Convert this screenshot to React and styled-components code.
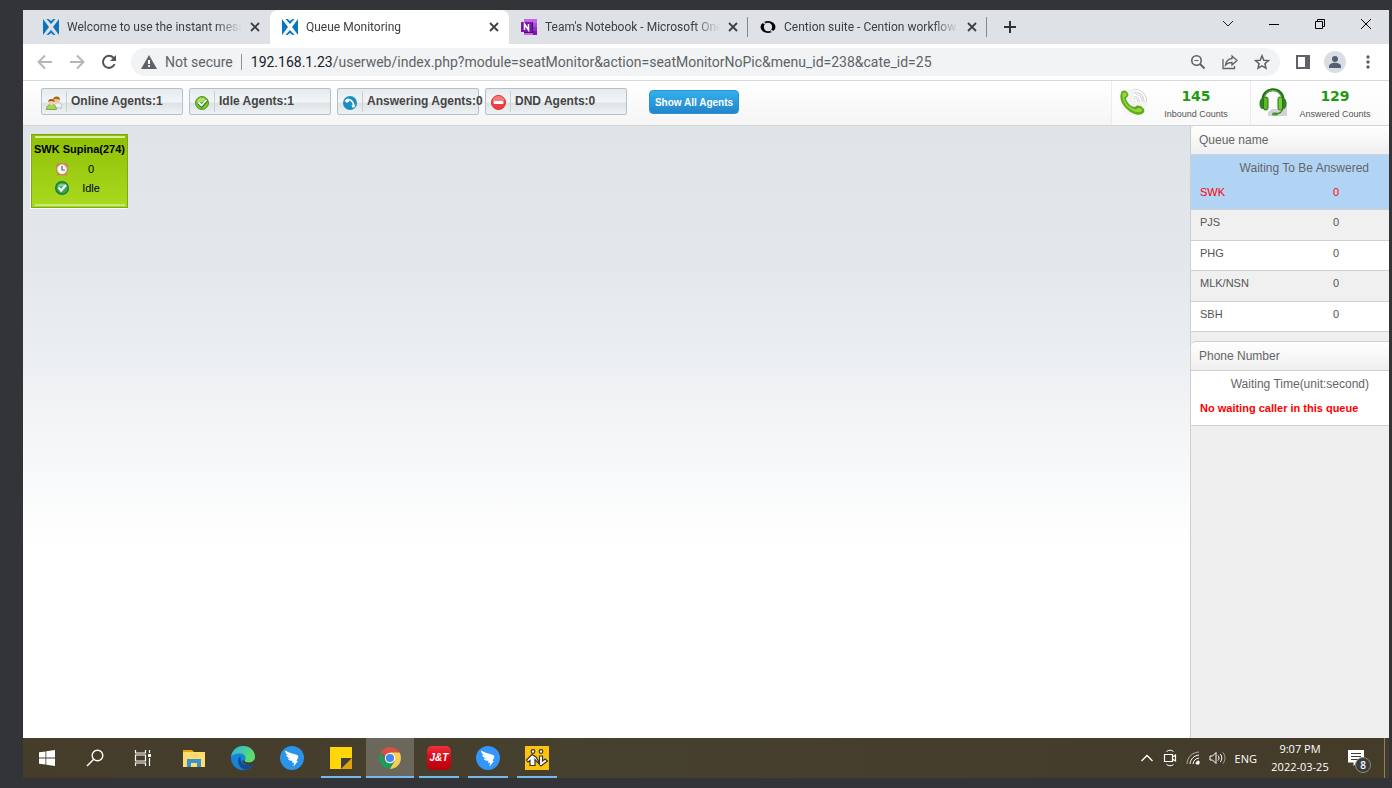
import React from 'react';
import styled, { createGlobalStyle, css } from 'styled-components';

const tabs = [
	{ id: 1, title: 'Welcome to use the instant messenger', icon: 'x' },
	{ id: 2, title: 'Queue Monitoring', icon: 'x', active: true },
	{ id: 3, title: "Team's Notebook - Microsoft OneNote", icon: 'onenote', divider: true },
	{ id: 4, title: 'Cention suite - Cention workflow', icon: 'cention', divider: true },
];

const counters = [
	{ label: 'Online Agents', value: 1, icon: 'users' },
	{ label: 'Idle Agents', value: 1, icon: 'check' },
	{ label: 'Answering Agents', value: 0, icon: 'phone' },
	{ label: 'DND Agents', value: 0, icon: 'dnd' },
];

const queues = [
	{ name: 'SWK', waiting: 0, selected: true },
	{ name: 'PJS', waiting: 0, striped: true },
	{ name: 'PHG', waiting: 0 },
	{ name: 'MLK/NSN', waiting: 0, striped: true },
	{ name: 'SBH', waiting: 0 },
];

const App = () => (
	<>
		<GlobalStyle />
		<Screen>
			<TabStrip>
				{tabs.map((tab) => (
					<Tab key={tab.id} $active={tab.active} $divider={tab.divider}>
						<Favicon name={tab.icon} />
						<TabTitle>{tab.title}</TabTitle>
						<TabClose aria-label="Close tab">
							<CloseIcon />
						</TabClose>
					</Tab>
				))}
				<NewTab aria-label="New tab">
					<svg width="14" height="14" viewBox="0 0 14 14" stroke="#303236" strokeWidth="2">
						<path d="M7 1v12M1 7h12" />
					</svg>
				</NewTab>
				<WindowControls>
					<WindowButton aria-label="Search tabs">
						<svg width="12" height="12" viewBox="0 0 12 12" fill="none" stroke="#222">
							<path d="M1 3l5 5 5-5" />
						</svg>
					</WindowButton>
					<WindowButton aria-label="Minimize">
						<svg width="12" height="12" viewBox="0 0 12 12" stroke="#000">
							<path d="M1 6.5h10" />
						</svg>
					</WindowButton>
					<WindowButton aria-label="Restore">
						<svg width="12" height="12" viewBox="0 0 12 12" fill="none" stroke="#000">
							<path d="M1.5 3.5h7v7h-7zM3.500 3.500v-2h7v7h-2" />
						</svg>
					</WindowButton>
					<WindowButton aria-label="Close">
						<svg width="12" height="12" viewBox="0 0 12 12" stroke="#000">
							<path d="M1 1l10 10M11 1L1 11" />
						</svg>
					</WindowButton>
				</WindowControls>
			</TabStrip>

			<AddressBar>
				<NavButton aria-label="Back">
					<svg width="16" height="16" viewBox="0 0 16 16" fill="none" stroke="#b4b6b9" strokeWidth="2">
						<path d="M15 8H2M8 1.500L1.500 8 8 14.500" />
					</svg>
				</NavButton>
				<NavButton aria-label="Forward">
					<svg width="16" height="16" viewBox="0 0 16 16" fill="none" stroke="#b4b6b9" strokeWidth="2">
						<path d="M1 8h13M8 1.500L14.500 8 8 14.500" />
					</svg>
				</NavButton>
				<NavButton aria-label="Reload">
					<svg width="16" height="16" viewBox="0 0 16 16" fill="none" stroke="#505357" strokeWidth="2">
						<path d="M13.500 10.200A6 6 0 1 1 12.400 3.800L14 5.500" />
						<path d="M15 1v6H9z" fill="#505357" stroke="none" />
					</svg>
				</NavButton>
				<Omnibox>
					<svg width="16" height="14" viewBox="0 0 16 14">
						<path d="M8 0l8 14H0z" fill="#5f6368" />
						<path d="M8 5v4M8 10.300v1.700" stroke="#fff" strokeWidth="2" />
					</svg>
					<Security>Not secure</Security>
					<Url>
						<b>192.168.1.23</b>/userweb/index.php?module=seatMonitor&amp;action=seatMonitorNoPic&amp;menu_id=238&amp;cate_id=25
					</Url>
					<OmniButton aria-label="Zoom">
						<svg width="16" height="16" viewBox="0 0 16 16" fill="none" stroke="#5f6368">
							<circle cx="6.500" cy="6.500" r="4.700" strokeWidth="1.600" />
							<path d="M10 10l4.500 4.500" strokeWidth="2" />
							<path d="M4.500 6.500h4" />
						</svg>
					</OmniButton>
					<OmniButton aria-label="Share">
						<svg width="16" height="16" viewBox="0 0 16 16" fill="none" stroke="#5f6368" strokeWidth="1.300">
							<path d="M1 5v9.500h11.500V12" />
							<path d="M10 2l5 4.500-5 4.500V8.500c-3 0-5 .8-6.500 2.500.5-3.500 2.500-6 6.500-6.500z" />
						</svg>
					</OmniButton>
					<OmniButton aria-label="Bookmark">
						<svg width="16" height="16" viewBox="0 0 16 16" fill="none" stroke="#5f6368" strokeWidth="1.500">
							<path d="M8 1.800l1.800 4.400 4.700.4-3.600 3.100 1.100 4.600L8 11.900l-4 2.400 1.100-4.600-3.600-3.100 4.700-.4z" />
						</svg>
					</OmniButton>
				</Omnibox>
				<BrowserActions>
					<OmniButton aria-label="Side panel">
						<svg width="14" height="14" viewBox="0 0 14 14">
							<path d="M0 0h14v14H0z" fill="#5f6368" />
							<path d="M2 2h7v10H2z" fill="#fff" />
						</svg>
					</OmniButton>
					<OmniButton aria-label="Profile">
						<svg width="22" height="22" viewBox="0 0 22 22" fill="#545f73">
							<circle cx="11" cy="11" r="11" fill="#dadde3" />
							<circle cx="11" cy="8" r="3" />
							<path d="M5 17v-1.500c0-5 12-5 12 0V17z" />
						</svg>
					</OmniButton>
					<OmniButton aria-label="Menu">
						<svg width="4" height="14" viewBox="0 0 4 14" fill="#5f6368">
							<circle cx="2" cy="2" r="1.700" />
							<circle cx="2" cy="7" r="1.700" />
							<circle cx="2" cy="12" r="1.700" />
						</svg>
					</OmniButton>
				</BrowserActions>
			</AddressBar>

			<MonitorBar>
				{counters.map((c) => (
					<Counter key={c.label}>
						<CounterIcon>
							<StatusIcon name={c.icon} />
						</CounterIcon>
						<span>
							{c.label}:{c.value}
						</span>
					</Counter>
				))}
				<ShowAll>Show All Agents</ShowAll>
				<Stats>
					<Stat>
						<InboundIcon />
						<StatText>
							<strong>145</strong>
							<small>Inbound Counts</small>
						</StatText>
					</Stat>
					<Stat>
						<HeadsetIcon />
						<StatText>
							<strong>129</strong>
							<small>Answered Counts</small>
						</StatText>
					</Stat>
				</Stats>
			</MonitorBar>

			<Content>
				<Seats>
					<AgentCard>
						<AgentName>SWK Supina(274)</AgentName>
						<AgentLine>
							<ClockIcon />
							<span>0</span>
						</AgentLine>
						<AgentLine>
							<IdleIcon />
							<span>Idle</span>
						</AgentLine>
					</AgentCard>
				</Seats>

				<Sidebar>
					<PanelTitle>Queue name</PanelTitle>
					<QueueTable>
						<thead>
							<QueueRow $selected>
								<th colSpan={2}>Waiting To Be Answered</th>
							</QueueRow>
						</thead>
						<tbody>
							{queues.map((q) => (
								<QueueRow key={q.name} $selected={q.selected} $striped={q.striped}>
									<td>{q.name}</td>
									<td>{q.waiting}</td>
								</QueueRow>
							))}
						</tbody>
					</QueueTable>
					<PanelTitle $spaced>Phone Number</PanelTitle>
					<QueueTable>
						<thead>
							<QueueRow>
								<th>Waiting Time(unit:second)</th>
							</QueueRow>
						</thead>
						<tbody>
							<QueueRow $warning>
								<td>No waiting caller in this queue</td>
							</QueueRow>
						</tbody>
					</QueueTable>
				</Sidebar>
			</Content>

			<Taskbar>
				<TaskGroup>
					<TaskButton aria-label="Start">
						<svg width="16" height="16" viewBox="0 0 16 16" fill="#fff">
							<path d="M0 2.300L6.500 1.400v6.100H0zM7.300 1.300L16 0v7.500H7.300zM0 8.400h6.500v6.200L0 13.700zM7.300 8.400H16V16l-8.700-1.200z" />
						</svg>
					</TaskButton>
					<TaskButton aria-label="Search">
						<svg width="18" height="18" viewBox="0 0 18 18" fill="none" stroke="#fff" strokeWidth="1.400">
							<circle cx="11.500" cy="6.500" r="5.300" />
							<path d="M7.700 10.300L1 17" />
						</svg>
					</TaskButton>
					<TaskButton aria-label="Task view">
						<svg width="18" height="16" viewBox="0 0 18 16" fill="none" stroke="#fff" strokeWidth="1.200">
							<path d="M1.500 0v3h10V0M1.500 16v-3h10v3M1.500 5h10v6h-10zM15.500 0v3M15.500 8v8" />
							<path d="M14 4h3v3h-3z" fill="#fff" stroke="none" />
						</svg>
					</TaskButton>
				</TaskGroup>
				<AppGroup>
					<TaskButton aria-label="File Explorer">
						<svg width="22" height="19" viewBox="0 0 22 19">
							<path d="M0 1h9l2 2h11v15H0z" fill="#e8a80c" />
							<path d="M0 3h22v15H0z" fill="#ffdc6e" />
							<path d="M4 18v-8h14v8h-4v-4H8v4z" fill="#3c8fd0" />
						</svg>
					</TaskButton>
					<TaskButton aria-label="Edge">
						<EdgeIcon />
					</TaskButton>
					<TaskButton aria-label="Messenger">
						<WingIcon color="#2b94e8" />
					</TaskButton>
					<TaskButton aria-label="Sticky Notes" $running>
						<svg width="22" height="22" viewBox="0 0 22 22">
							<path d="M0 0h22v22H0z" fill="#ffd608" />
							<path d="M22 11v11H11z" fill="#e0a30b" />
							<path d="M11 11h11L11 22z" fill="#3f3f3f" />
						</svg>
					</TaskButton>
					<TaskButton aria-label="Chrome" $running $active>
						<svg width="22" height="22" viewBox="0 0 22 22">
							<path d="M11 11L1.500 5.500A11 11 0 0 1 20.500 5.500z" fill="#d9503f" />
							<path d="M11 11V5.500h9.500A11 11 0 0 1 11 22z" fill="#f8cf55" />
							<path d="M11 22A11 11 0 0 1 1.500 5.500L6.200 13.700 11 11l4.800 2.700z" fill="#1f9b59" />
							<circle cx="11" cy="11" r="5.200" fill="#fff" />
							<circle cx="11" cy="11" r="4.100" fill="#4385f3" />
						</svg>
					</TaskButton>
					<TaskButton aria-label="J&T" $running>
						<JtLogo>J&amp;T</JtLogo>
					</TaskButton>
					<TaskButton aria-label="DingTalk" $running>
						<WingIcon color="#3296fa" />
					</TaskButton>
					<TaskButton aria-label="Transfer" $running>
						<svg width="24" height="24" viewBox="0 0 24 24">
							<path d="M0 0h24v24H0z" fill="#fdc30d" />
							<g fill="#fff" stroke="#3a3429" strokeWidth="1.200">
								<circle cx="8" cy="5.500" r="1.800" />
								<circle cx="16" cy="5.500" r="1.800" />
								<path d="M1.500 14L7 8.500l4 2.500 3.500 6V10h3v5l2.500-2 2.500 2-6.500 5-6-6.500v6h-5v-5L3 16z" />
							</g>
						</svg>
					</TaskButton>
				</AppGroup>
				<Tray>
					<svg width="14" height="14" viewBox="0 0 14 14" fill="none" stroke="#fff" strokeWidth="1.300">
						<path d="M1.500 10L7 4.500l5.500 5.500" />
					</svg>
					<svg width="14" height="18" viewBox="0 0 14 18" fill="none" stroke="#fff">
						<path d="M3.500 2.500c2-1.700 5-1.700 7 0M3.500 15.500c2 1.700 5 1.700 7 0" />
						<path d="M1.500 5.500h8v7h-8zM9.500 8l3-2v6l-3-2" strokeWidth="1.200" />
					</svg>
					<svg width="14" height="14" viewBox="0 0 14 14" fill="none" stroke="#fff">
						<path d="M1 13C1.500 6 6 1.500 13 1" opacity=".6" />
						<path d="M4 13c.5-5 4-8.500 9-9M7 13c.5-3.500 2.500-5.500 6-6" />
						<path d="M10 13c0-2 1-3 3-3v3z" fill="#fff" />
					</svg>
					<svg width="17" height="14" viewBox="0 0 17 14" fill="none" stroke="#fff">
						<path d="M1 5h2.500L7 1.500v11L3.500 9H1z" />
						<path d="M9 4.500c1.300 1.500 1.300 3.500 0 5M11.300 3c2 2.300 2 5.700 0 8" />
						<path d="M13.700 1.200c3 3.400 3 8.200 0 11.600" opacity=".5" />
					</svg>
					<span>ENG</span>
				</Tray>
				<Clock>
					<span>9:07 PM</span>
					<span>2022-03-25</span>
				</Clock>
				<NotifyButton aria-label="Notifications">
					<svg width="16" height="16" viewBox="0 0 16 16">
						<path d="M0 0h16v12.500H9L5.500 16v-3.500H0z" fill="#fff" />
						<path d="M3 3.500h10M3 6.500h10M3 9.500h7" stroke="#453d2c" />
					</svg>
					<Badge>8</Badge>
				</NotifyButton>
				<ShowDesktop aria-label="Show desktop" />
			</Taskbar>
		</Screen>
	</>
);

export default App;

const CloseIcon = () => (
	<svg width="10" height="10" viewBox="0 0 10 10" stroke="#3c4043" strokeWidth="1.800">
		<path d="M1 1l8 8M9 1L1 9" />
	</svg>
);

const Favicon = ({ name }) => {
	if (name === 'onenote') {
		return (
			<svg width="16" height="16" viewBox="0 0 16 16">
				<path d="M3 0h13v16H3z" fill="#ca64ea" />
				<path d="M12 4h4v4h-4z" fill="#ae4bd5" />
				<path d="M12 8h4v4h-4z" fill="#9332bf" />
				<path d="M12 12h4v4h-4z" fill="#7719aa" />
				<path d="M3 3h9v11H3z" fill="#4b1169" />
				<path d="M0 3h11v10H0z" fill="#7719aa" />
				<path d="M3.500 11V5l4 6V5" fill="none" stroke="#fff" strokeWidth="1.500" />
			</svg>
		);
	}
	if (name === 'cention') {
		return (
			<svg width="16" height="16" viewBox="0 0 16 16">
				<ellipse cx="8" cy="8" rx="7.500" ry="6" fill="#000" />
				<circle cx="8" cy="8" r="4.200" fill="#dee1e6" />
				<path d="M1.500 3l4 1.500M14.500 13l-4-1.500" stroke="#dee1e6" strokeWidth="1.500" />
			</svg>
		);
	}
	return (
		<svg width="16" height="16" viewBox="0 0 16 16" fill="#0b76bd">
			<path d="M0 0l6 8-6 8zM16 0l-6 8 6 8z" />
			<path d="M3.500 0h2L8 2 10.500 0h2L8 5zM3.500 16L8 11l4.500 5h-2L8 14l-2.500 2z" />
		</svg>
	);
};

const StatusIcon = ({ name }) => {
	switch (name) {
		case 'users':
			return (
				<svg width="16" height="14" viewBox="0 0 16 14">
					<path d="M8 12c0-7 8-7 8-1v1z" fill="#edf0f2" stroke="#9dabb5" strokeWidth=".7" />
					<circle cx="10.700" cy="3.700" r="3.200" fill="#f2c490" />
					<path d="M7 3.700C7 0 13.500-1 14.200 3.500 12 3.700 10 2 7 3.700z" fill="#a8681d" />
					<path d="M.4 13.500c0-7 10-7 10 0z" fill="#a8d45c" stroke="#6d9b2b" strokeWidth=".8" />
					<circle cx="5.500" cy="6" r="3" fill="#f7cf9d" />
					<path d="M2.300 6C2 2 8.700 2 8.700 6 7 5.700 5.500 4 2.300 6z" fill="#8d5519" />
				</svg>
			);
		case 'check':
			return (
				<svg width="14" height="14" viewBox="0 0 14 14">
					<circle cx="7" cy="7" r="6.500" fill="#77c431" stroke="#4e961d" />
					<path d="M2 6a5 4 0 0 1 10 0z" fill="#abe16d" />
					<path d="M3.500 7l3 3L12 4" fill="none" stroke="#2f7514" strokeWidth="3" />
					<path d="M3.500 6.500l3 3L11.500 4" fill="none" stroke="#fff" strokeWidth="1.800" />
				</svg>
			);
		case 'phone':
			return (
				<svg width="14" height="14" viewBox="0 0 14 14">
					<circle cx="7" cy="7" r="7" fill="#178fbe" />
					<path d="M2.500 5.500C3.500 2.500 9.500 2.500 10.800 9.500" fill="none" stroke="#fff" strokeWidth="1.800" />
					<path d="M2 5l2.500-2 2 2.200L4 7zM8.500 9l3-.5.500 2.500-2.700.8z" fill="#fff" />
				</svg>
			);
		default:
			return (
				<svg width="15" height="15" viewBox="0 0 15 15">
					<circle cx="7.500" cy="7.500" r="7" fill="#ee3f43" stroke="#d8282d" />
					<path d="M1.500 6a6 5 0 0 1 12 0z" fill="#f8797a" />
					<rect x="2.500" y="6" width="10" height="3" rx="1" fill="#fff" />
				</svg>
			);
	}
};

const InboundIcon = () => (
	<svg width="28" height="28" viewBox="0 0 28 28" fill="none">
		<circle cx="14" cy="14" r="13.500" fill="#f4f4f4" />
		<g stroke="#c6c8c8" strokeWidth="3.200">
			<path d="M14 2.500c7 0 11.500 5 11.500 11.500M14 7c4 0 7 3 7 7M14 11.500c1.500 0 2.500 1 2.500 2.500" />
		</g>
		<g stroke="#fff" strokeWidth="1.800">
			<path d="M14 2.500c7 0 11.500 5 11.500 11.500M14 7c4 0 7 3 7 7M14 11.500c1.500 0 2.500 1 2.500 2.500" />
		</g>
		<path d="M1 5c1-3 4-3 6-1 2 2 2 4-1 6 0 4 5 9 9 9 2-2 5-2 8 1 2 2 2 4-1 6C13 30-3 15 1 5z" fill="#5fac18" />
		<path d="M2.500 5.500c1-1.500 3-1.500 4 0s0 2.500-2.500 4c1 6 6 11 12 12 2-2 4-2 5.500-.5 1 1 .5 2-.5 3C11 25.500 1 15 2.500 5.500z" fill="#94d642" />
	</svg>
);

const HeadsetIcon = () => (
	<svg width="28" height="28" viewBox="0 0 28 28" fill="none">
		<path d="M9 24l4-3h8l5-8 2 2v13H9z" fill="#d3d3d3" />
		<path d="M4 13C3-2 25-2 24 13" stroke="#216e19" strokeWidth="3" />
		<path d="M5 10C7 0 21 0 23 10" stroke="#6dbf51" strokeWidth="1" />
		<path d="M24 19c0 5-4 7-8 7" stroke="#338927" strokeWidth="1.500" />
		<rect x="13" y="24.500" width="6" height="3" rx="1.500" fill="#429c29" />
		<ellipse cx="3.500" cy="15.500" rx="3" ry="5.500" fill="#2e851d" />
		<rect x="4.500" y="9" width="4.500" height="13" rx="2" fill="#5cba24" stroke="#2f6e23" />
		<ellipse cx="24.500" cy="15.500" rx="3" ry="5.500" fill="#2e851d" />
		<rect x="19" y="9" width="4.500" height="13" rx="2" fill="#73cf32" stroke="#2f6e23" />
	</svg>
);

const ClockIcon = () => (
	<svg width="14" height="14" viewBox="0 0 14 14" fill="none">
		<path d="M1 4.500L4 1M13 4.500L10 1M2.500 13.500L4 12M11.500 13.500L10 12" stroke="#c98a4b" strokeWidth="2" />
		<circle cx="7" cy="7.300" r="5.500" fill="#f7f7f2" stroke="#c58a59" strokeWidth="1.400" />
		<path d="M7 4v4h3" stroke="#566273" strokeWidth="1.200" />
	</svg>
);

const IdleIcon = () => (
	<svg width="14" height="14" viewBox="0 0 14 14" fill="none">
		<circle cx="7" cy="7" r="6.300" fill="#35a853" stroke="#197c39" strokeWidth="1.400" />
		<path d="M2.500 5.500a4.700 4 0 0 1 9 0z" fill="#83cf8f" />
		<path d="M3.500 6.500l2.700 3L11 4" stroke="#fff" strokeWidth="2.200" />
	</svg>
);

const WingIcon = ({ color }) => (
	<svg width="24" height="24" viewBox="0 0 24 24">
		<circle cx="12" cy="12" r="12" fill={color} />
		<path d="M5 4.500c4 2.500 8 3 12.500 4.700 1 .5 1 1.200.5 2.500L16.500 15H18l-4.500 5.500.5-3.700h-2l.6-2c-3 0-4.300-1-5-2.400l3 .4C8 12 6.500 10.500 6 8.500l3.500 1.200C6.500 8.500 5 7 5 4.500z" fill="#fff" />
	</svg>
);

const EdgeIcon = () => (
	<svg width="24" height="24" viewBox="0 0 24 24">
		<defs>
			<linearGradient id="edgeTop" x1="0" y1="0" x2="1" y2=".4">
				<stop offset="0" stopColor="#2bb4e9" />
				<stop offset="1" stopColor="#61dd65" />
			</linearGradient>
		</defs>
		<circle cx="12" cy="12" r="12" fill="#1685d9" />
		<path d="M0 11C1 4.500 6 0 12 0c7 0 12 5 12 10.500 0 4-3 6-6.500 6-3 0-4.500-1.300-3.500-2.500 1.500-2 .5-6-4.500-6.500C5 7 1.500 8.500 0 11z" fill="url(#edgeTop)" />
		<path d="M9.500 10C5 13 7 22 14 23.800c4-.6 7-2.800 8.500-5.800-5 2.500-14 1.500-13-8z" fill="#114b92" />
		<path d="M14 14c-1 1.200.5 2.500 3.500 2.500 2 0 4.500-.5 6-3l1 .5-1.500 4.500c-5 2-11.500.2-12-4.500 1 .8 2.500 1 3 0z" fill="#453d2c" />
	</svg>
);

const GlobalStyle = createGlobalStyle`
	* {
		box-sizing: border-box;
	}
	body {
		margin: 0;
		background: #333438;
		font-family: 'Liberation Sans', Arial, sans-serif;
	}
	button {
		padding: 0;
		border: 0;
		background: none;
		font: inherit;
		color: inherit;
	}
	svg {
		display: block;
		flex-shrink: 0;
	}
`;

const Screen = styled.div`
	display: flex;
	flex-direction: column;
	min-height: 100vh;
	padding: 10px 3px 10px 23px;
`;

const TabStrip = styled.div`
	display: flex;
	align-items: stretch;
	height: 34px;
	padding-left: 8px;
	background: #dee1e6;
	font-family: Roboto, sans-serif;
	font-size: 12px;
	color: #3c4043;
`;

const Tab = styled.div`
	display: flex;
	align-items: center;
	flex: 0 1 239px;
	min-width: 0;
	padding: 0 10px 0 12px;
	border-radius: 8px 8px 0 0;
	background: ${({ $active }) => ($active ? '#fff' : 'none')};
	${({ $divider }) =>
		$divider &&
		css`
			background: linear-gradient(#85888c, #85888c) right center / 1px 20px no-repeat;
		`}
`;

const TabTitle = styled.span`
	flex: 1;
	min-width: 0;
	margin: 0 8px;
	overflow: hidden;
	white-space: nowrap;
	mask-image: linear-gradient(to right, #000 85%, transparent);
`;

const TabClose = styled.button`
	display: flex;
`;

const NewTab = styled.button`
	display: flex;
	align-items: center;
	margin-left: 16px;
`;

const WindowControls = styled.div`
	display: flex;
	align-items: center;
	margin-left: auto;
	padding-bottom: 6px;
`;

const WindowButton = styled.button`
	display: flex;
	justify-content: center;
	width: 46px;
`;

const AddressBar = styled.div`
	display: flex;
	align-items: center;
	height: 37px;
	padding-left: 14px;
	border-bottom: 1px solid #d7d9dc;
	background: #fff;
	font-family: Roboto, sans-serif;
	font-size: 14px;
`;

const NavButton = styled.button`
	display: flex;
	width: 32px;
	&:nth-child(3) {
		width: 30px;
	}
`;

const Omnibox = styled.div`
	display: flex;
	align-items: center;
	flex: 1;
	min-width: 0;
	height: 28px;
	padding: 0 10px;
	border-radius: 14px;
	background: #f1f3f4;
	color: #5f6368;
`;

const Security = styled.span`
	margin-left: 8px;
	padding-right: 8px;
	border-right: 1px solid #8f9296;
	line-height: 16px;
	white-space: nowrap;
`;

const Url = styled.span`
	flex: 1;
	min-width: 0;
	margin-left: 9px;
	overflow: hidden;
	white-space: nowrap;
	b {
		font-weight: 400;
		color: #202124;
	}
`;

const OmniButton = styled.button`
	display: flex;
	margin-left: 16px;
`;

const BrowserActions = styled.div`
	display: flex;
	align-items: center;
	padding-right: 19px;
	${OmniButton}:nth-child(2) {
		margin-left: 14px;
	}
	${OmniButton}:nth-child(3) {
		margin-left: 20px;
	}
`;

const MonitorBar = styled.div`
	display: flex;
	align-items: center;
	gap: 6px;
	height: 45px;
	padding-left: 18px;
	border-bottom: 1px solid #d4d4d4;
	background: linear-gradient(#fff, #f5f5f5);
`;

const Counter = styled.button`
	display: flex;
	align-items: center;
	width: 142px;
	height: 27px;
	margin-bottom: 4px;
	border: 1px solid #b3c1cb;
	border-radius: 2px;
	background: linear-gradient(#e6ebef 0%, #f3f5f7 52%, #dce2e6 56%, #eff2f4 100%);
	font-size: 12px;
	font-weight: 700;
	color: #444;
	white-space: nowrap;
`;

const CounterIcon = styled.span`
	display: flex;
	align-items: center;
	justify-content: center;
	flex: 0 0 25px;
	height: 21px;
	margin-right: 4px;
	padding-top: 3px;
	border-right: 1px solid #c8d0d6;
`;

const ShowAll = styled.button`
	width: 90px;
	height: 24px;
	margin: 0 0 2px 16px;
	border: 1px solid #2b93d1;
	border-radius: 4px;
	background: linear-gradient(#33b1ec, #2385cb);
	font-size: 10px;
	font-weight: 700;
	color: #fff;
	white-space: nowrap;
`;

const Stats = styled.div`
	display: flex;
	align-self: stretch;
	margin-left: auto;
`;

const Stat = styled.div`
	display: flex;
	align-items: center;
	width: 139px;
	padding: 0 0 2px 8px;
	border-left: 1px solid #ececec;
	background: linear-gradient(#fff, #f9f9f9);
`;

const StatText = styled.div`
	display: flex;
	flex: 1;
	flex-direction: column;
	align-items: center;
	gap: 4px;
	padding: 4px 8px 0 2px;
	strong {
		font: 700 14px/16px 'DejaVu Sans', Verdana, sans-serif;
		color: #21990f;
	}
	small {
		font-size: 9px;
		line-height: 12px;
		color: #555;
		white-space: nowrap;
	}
`;

const Content = styled.main`
	display: flex;
	flex: 1;
`;

const Seats = styled.section`
	flex: 1;
	padding: 8px;
	background: linear-gradient(#dfe4e9 0, #e4e8ec 150px, #fff 420px);
`;

const AgentCard = styled.article`
	display: flex;
	flex-direction: column;
	align-items: center;
	width: 97px;
	height: 74px;
	padding-top: 7px;
	border: 1px solid #7faa0d;
	background: linear-gradient(#d8eca5, #d8eca5) center 1px / 90px 2px no-repeat,
		linear-gradient(#c8e87a, #c8e87a) center bottom 1px / 90px 2px no-repeat, linear-gradient(#8fc006, #a9da20);
	box-shadow: -1px 1px 0 #fff;
	font-size: 11px;
	color: #000;
`;

const AgentName = styled.h2`
	margin: 0 0 3px;
	font-size: 11px;
	line-height: 14px;
	white-space: nowrap;
`;

const AgentLine = styled.div`
	display: flex;
	align-items: center;
	align-self: stretch;
	height: 19px;
	padding-left: 23px;
	span {
		width: 44px;
		text-align: center;
	}
`;

const Sidebar = styled.aside`
	flex: 0 0 199px;
	border-left: 1px solid #cfcfcf;
	background: #efefef;
`;

const PanelTitle = styled.h2`
	height: 29px;
	margin: ${({ $spaced }) => ($spaced ? '9px 0 0' : '0')};
	padding-left: 8px;
	border-bottom: 1px solid #d1d1d1;
	border-radius: 5px 0 0 0;
	background: linear-gradient(#fff, #efefef);
	font-size: 12px;
	font-weight: 400;
	line-height: 28px;
	color: #666;
	${({ $spaced }) =>
		$spaced &&
		css`
			height: 30px;
			border-top: 1px solid #d1d1d1;
		`}
`;

const QueueTable = styled.table`
	width: 100%;
	border-spacing: 0;
	font-size: 11px;
	color: #555;
	th {
		height: 25px;
		padding: 0 20px 0 0;
		font-size: 12px;
		font-weight: 400;
		text-align: right;
		color: #666;
	}
	td {
		padding: 0 0 6px 9px;
		border-bottom: 1px solid #d1d1d1;
	}
	td + td {
		width: 106px;
		padding-left: 0;
		text-align: center;
	}
`;

const QueueRow = styled.tr`
	background: ${({ $selected, $striped }) => ($selected ? '#b1d4f5' : $striped ? '#f0f0f0' : '#fff')};
	td {
		height: ${({ $striped }) => ($striped ? '31px' : '30px')};
		color: ${({ $selected, $warning }) => ($selected || $warning ? '#f00' : '#555')};
		font-weight: ${({ $warning }) => ($warning ? 700 : 400)};
	}
`;

const Taskbar = styled.footer`
	display: flex;
	height: 40px;
	background: linear-gradient(90deg, #453c2a, #46402f 40%, #443b29);
	font-family: 'Open Sans', 'Noto Sans', sans-serif;
	font-size: 11px;
	color: #fff;
`;

const TaskGroup = styled.div`
	display: flex;
`;

const AppGroup = styled.div`
	display: flex;
	gap: 1px;
	margin-left: 3px;
`;

const TaskButton = styled.button`
	display: flex;
	align-items: center;
	justify-content: center;
	width: 48px;
	background: ${({ $active, $running }) => {
		const line = $running ? `linear-gradient(#76b9ed, #76b9ed) bottom / ${$active ? 48 : 40}px 2px no-repeat` : 'none';
		return $active ? `${line}, #6b675a` : line;
	}};
`;

const JtLogo = styled.span`
	width: 24px;
	height: 24px;
	border-radius: 5px;
	background: linear-gradient(#f0313c, #d30814 50%, #b8000d);
	font: italic 700 10px/23px 'Liberation Sans', Arial, sans-serif;
	text-align: center;
`;

const Tray = styled.div`
	display: flex;
	align-items: center;
	gap: 9px;
	margin-left: auto;
`;

const Clock = styled.div`
	display: flex;
	flex-direction: column;
	align-items: center;
	justify-content: center;
	width: 86px;
	line-height: 18px;
`;

const NotifyButton = styled.button`
	position: relative;
	display: flex;
	align-items: center;
	width: 41px;
	padding-left: 5px;
`;

const Badge = styled.span`
	position: absolute;
	top: 19px;
	left: 12px;
	width: 16px;
	height: 16px;
	border: 1px solid #8b8b87;
	border-radius: 50%;
	background: #3b3c3c;
	font-size: 10px;
	font-weight: 600;
	line-height: 14px;
	text-align: center;
`;

const ShowDesktop = styled.button`
	width: 5px;
	border-left: 1px solid #88816f;
`;
